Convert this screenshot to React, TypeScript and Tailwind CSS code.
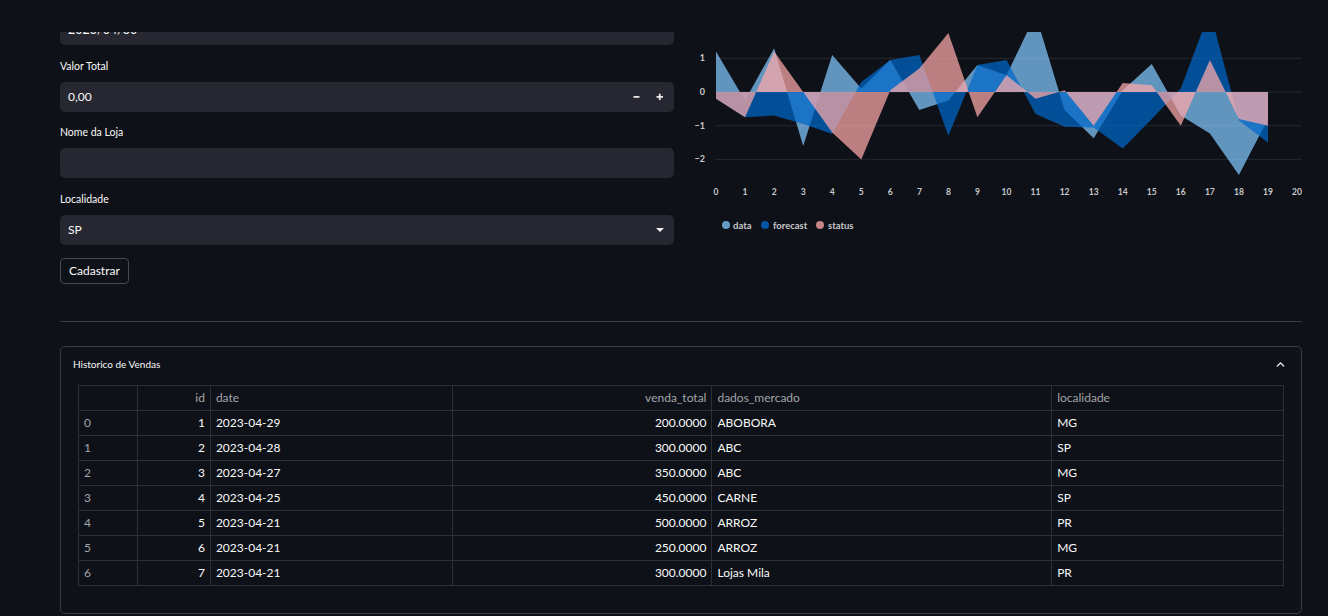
import React from 'react';
import { ChevronUp } from 'lucide-react';

const FONT = { fontFamily: 'Lato, "Noto Sans", "Liberation Sans", sans-serif' };

const dataSeries = [1.2, -0.25, 1.3, -1.6, 1.1, 0.1, 0.95, -0.53, -0.25, 0.8, 0.5, 2.3, -0.53, -1.37, 0.05, 0.83, -0.7, -1.23, -2.46, -0.8];
const forecastSeries = [-0.2, -0.75, -0.7, -0.95, -1.25, 0.3, 0.95, 1.1, -1.3, 0.8, 0.95, -0.65, -1.03, -1.05, -1.68, -0.8, 0.1, 2.4, -0.85, -1.5];
const statusSeries = [-0.2, -0.75, 1.2, 0, -1.2, -2.0, 0.05, 0.7, 1.75, -0.75, 0.5, -0.2, 0.05, -1.0, 0.27, 0.2, -1.0, 0.95, -0.8, -1.0];

const X = (i: number) => 28 + i * 29.05;
const Y = (v: number) => 92 - v * 33.7;

const areaPoints = (values: number[]) => {
  const pts = values.map((v, i) => `${X(i).toFixed(1)},${Y(v).toFixed(1)}`);
  return [`${X(0)},${Y(0)}`, ...pts, `${X(values.length - 1).toFixed(1)},${Y(0)}`].join(' ');
};

const rows = [
  { idx: 0, id: 1, date: '2023-04-29', total: '200.0000', mercado: 'ABOBORA', loc: 'MG' },
  { idx: 1, id: 2, date: '2023-04-28', total: '300.0000', mercado: 'ABC', loc: 'SP' },
  { idx: 2, id: 3, date: '2023-04-27', total: '350.0000', mercado: 'ABC', loc: 'MG' },
  { idx: 3, id: 4, date: '2023-04-25', total: '450.0000', mercado: 'CARNE', loc: 'SP' },
  { idx: 4, id: 5, date: '2023-04-21', total: '500.0000', mercado: 'ARROZ', loc: 'PR' },
  { idx: 5, id: 6, date: '2023-04-21', total: '250.0000', mercado: 'ARROZ', loc: 'MG' },
  { idx: 6, id: 7, date: '2023-04-21', total: '300.0000', mercado: 'Lojas Mila', loc: 'PR' },
];

const Label = ({ children }: { children: React.ReactNode }) => (
  <div className="h-[20px] leading-[20px] text-[10.5px] text-[#fafafa] mb-[6px]">{children}</div>
);

const Chart = () => (
  <svg width="614" height="240" className="block">
    {[2, 1, 0, -1, -2].map((v) => (
      <line key={v} x1="27" x2="614" y1={Y(v)} y2={Y(v)} stroke="#262830" strokeWidth="1" />
    ))}
    <polygon points={areaPoints(dataSeries)} fill="#83c9ff" fillOpacity="0.72" />
    <polygon points={areaPoints(forecastSeries)} fill="#0068c9" fillOpacity="0.72" />
    <polygon points={areaPoints(statusSeries)} fill="#ffabab" fillOpacity="0.72" />
    {[1, 0, -1, -2].map((v) => (
      <text key={v} x="17" y={Y(v) + 3} textAnchor="end" fontSize="9" fontWeight="700" fill="#c8c9cc">
        {v < 0 ? `−${-v}` : v}
      </text>
    ))}
    {Array.from({ length: 21 }, (_, i) => (
      <text key={i} x={X(i)} y="195" textAnchor="middle" fontSize="8.5" fontWeight="700" fill="#c8c9cc">
        {i}
      </text>
    ))}
    <circle cx="38" cy="225" r="4" fill="#83c9ff" fillOpacity="0.75" />
    <text x="45" y="228.5" fontSize="9.5" fontWeight="700" fill="#c8c9cc">data</text>
    <circle cx="77" cy="225" r="4" fill="#0068c9" fillOpacity="0.8" />
    <text x="85" y="228.5" fontSize="9.5" fontWeight="700" fill="#c8c9cc">forecast</text>
    <circle cx="132" cy="225" r="4" fill="#ffabab" fillOpacity="0.75" />
    <text x="140" y="228.5" fontSize="9.5" fontWeight="700" fill="#c8c9cc">status</text>
  </svg>
);

export default function App() {
  const cols = [
    { key: 'idx', label: '', w: 'w-[59px]', align: 'text-left', dim: true },
    { key: 'id', label: 'id', w: 'w-[73px]', align: 'text-right', dim: false },
    { key: 'date', label: 'date', w: 'w-[242px]', align: 'text-left', dim: false },
    { key: 'total', label: 'venda_total', w: 'w-[260px]', align: 'text-right', dim: false },
    { key: 'mercado', label: 'dados_mercado', w: 'w-[340px]', align: 'text-left', dim: false },
    { key: 'loc', label: 'localidade', w: 'w-[232px]', align: 'text-left', dim: false },
  ];

  return (
    <div className="min-h-screen bg-[#0e1117] text-[#fafafa] overflow-hidden" style={FONT}>
      {/* top header overlay */}
      <div className="fixed top-0 left-0 right-0 h-[32px] bg-[#0e1117] z-10" />

      <div className="pl-[60px] pr-[26px]">
        <div className="grid grid-cols-2 gap-[14px]">
          {/* form column */}
          <div className="flex flex-col pt-[15px]">
            <div className="h-[30px] rounded-[5px] bg-[#262730] px-[8px] flex items-center text-[12.5px]">2023/04/30</div>

            <div className="mt-[11px]">
              <Label>Valor Total</Label>
              <div className="h-[30px] rounded-[5px] bg-[#262730] pl-[8px] pr-[8px] flex items-center text-[12px]">
                <span className="flex-1">0,00</span>
                <svg width="8" height="8" viewBox="0 0 8 8" className="mr-[15px]">
                  <rect x="0.5" y="3" width="6" height="1.8" fill="#e6e6e6" />
                </svg>
                <svg width="8" height="8" viewBox="0 0 8 8" className="mr-[2px]">
                  <rect x="0.5" y="3" width="6.5" height="1.8" fill="#e6e6e6" />
                  <rect x="2.85" y="0.7" width="1.8" height="6.4" fill="#e6e6e6" />
                </svg>
              </div>
            </div>

            <div className="mt-[10px]">
              <Label>Nome da Loja</Label>
              <div className="h-[30px] rounded-[5px] bg-[#262730]" />
            </div>

            <div className="mt-[11px]">
              <Label>Localidade</Label>
              <div className="h-[30px] rounded-[5px] bg-[#262730] px-[8px] flex items-center text-[12px]">
                <span className="flex-1">SP</span>
                <svg width="10" height="6" viewBox="0 0 10 6" className="mr-[1px]">
                  <polygon points="1,1 9,1 5,5" fill="#f0f0f0" />
                </svg>
              </div>
            </div>

            <div className="mt-[12px]">
              <button className="h-[26px] px-[8px] rounded-[4px] border border-[#484a53] text-[12px] text-[#fafafa] bg-transparent">
                Cadastrar
              </button>
            </div>
          </div>

          {/* chart column */}
          <div>
            <Chart />
          </div>
        </div>

        <div className="mt-[37px] h-px bg-[#3a3c44]" />

        <div className="mt-[24px] border border-[#3a3c44] rounded-[5px]">
          <div className="h-[38px] pb-[3px] pl-[12px] pr-[14px] flex items-center justify-between">
            <span className="text-[10px] text-[#fafafa]">Historico de Vendas</span>
            <ChevronUp size={13} strokeWidth={2.5} className="text-[#fafafa]" />
          </div>
          <div className="px-[17px] pb-[27px]">
            <table className="border-collapse text-[12px]">
              <thead>
                <tr className="h-[25px]">
                  {cols.map((c) => (
                    <th
                      key={c.key}
                      className={`${c.w} ${c.align} font-normal px-[5px] border border-[#2d2f36] text-[#a3a5ab]`}
                    >
                      {c.label}
                    </th>
                  ))}
                </tr>
              </thead>
              <tbody>
                {rows.map((r) => (
                  <tr key={r.idx} className="h-[25px]">
                    {cols.map((c) => (
                      <td
                        key={c.key}
                        className={`${c.align} px-[5px] border border-[#2d2f36] ${c.dim ? 'text-[#a3a5ab]' : 'text-[#fafafa]'}`}
                      >
                        {(r as any)[c.key]}
                      </td>
                    ))}
                  </tr>
                ))}
              </tbody>
            </table>
          </div>
        </div>
      </div>
    </div>
  );
}
